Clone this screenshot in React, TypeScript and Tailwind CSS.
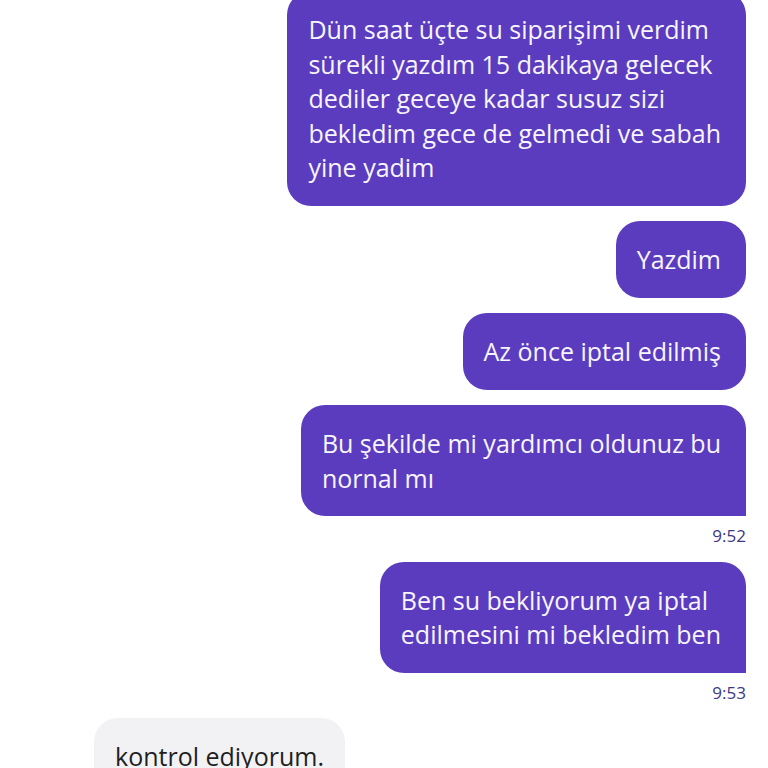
import React from "react";

type Msg = {
  lines: string[];
  tail?: boolean;
  time?: string;
};

const outgoing: Msg[] = [
  {
    lines: [
      "Dün saat üçte su siparişimi verdim",
      "sürekli yazdım 15 dakikaya gelecek",
      "dediler geceye kadar susuz sizi",
      "bekledim gece de gelmedi ve sabah",
      "yine yadim",
    ],
  },
  { lines: ["Yazdim"] },
  { lines: ["Az önce iptal edilmiş"] },
  { lines: ["Bu şekilde mi yardımcı oldunuz bu", "nornal mı"], tail: true, time: "9:52" },
  { lines: ["Ben su bekliyorum ya iptal", "edilmesini mi bekledim ben"], tail: true, time: "9:53" },
];

export default function App() {
  return (
    <div
      className="w-[768px] h-[768px] overflow-hidden bg-white"
      style={{ fontFamily: "'Open Sans', 'Noto Sans', sans-serif" }}
    >
      <div className="flex flex-col items-end pr-[22px] mt-[-9px]">
        {outgoing.map((m, i) => (
          <div key={i} className="flex flex-col items-end mb-[15.5px]">
            <div
              className={`bg-[#5b3cbf] text-[#f7f5ff] text-[25px] leading-[34.5px] px-[21px] py-[21px] rounded-[24px] ${
                m.tail ? "rounded-br-none" : ""
              }`}
            >
              {m.lines.map((l, j) => (
                <div key={j} className="whitespace-nowrap pr-[4px]">
                  {l}
                </div>
              ))}
            </div>
            {m.time && (
              <div className="mt-[9px] mb-[-1px] text-[17px] leading-[22px] font-medium text-[#3d3885]">
                {m.time}
              </div>
            )}
          </div>
        ))}
      </div>
      <div className="pl-[94px]">
        <div className="inline-block bg-[#f2f2f4] text-[#1f1f1f] text-[25px] leading-[34.5px] px-[21px] py-[21px] rounded-[24px]">
          kontrol ediyorum.
        </div>
      </div>
    </div>
  );
}
